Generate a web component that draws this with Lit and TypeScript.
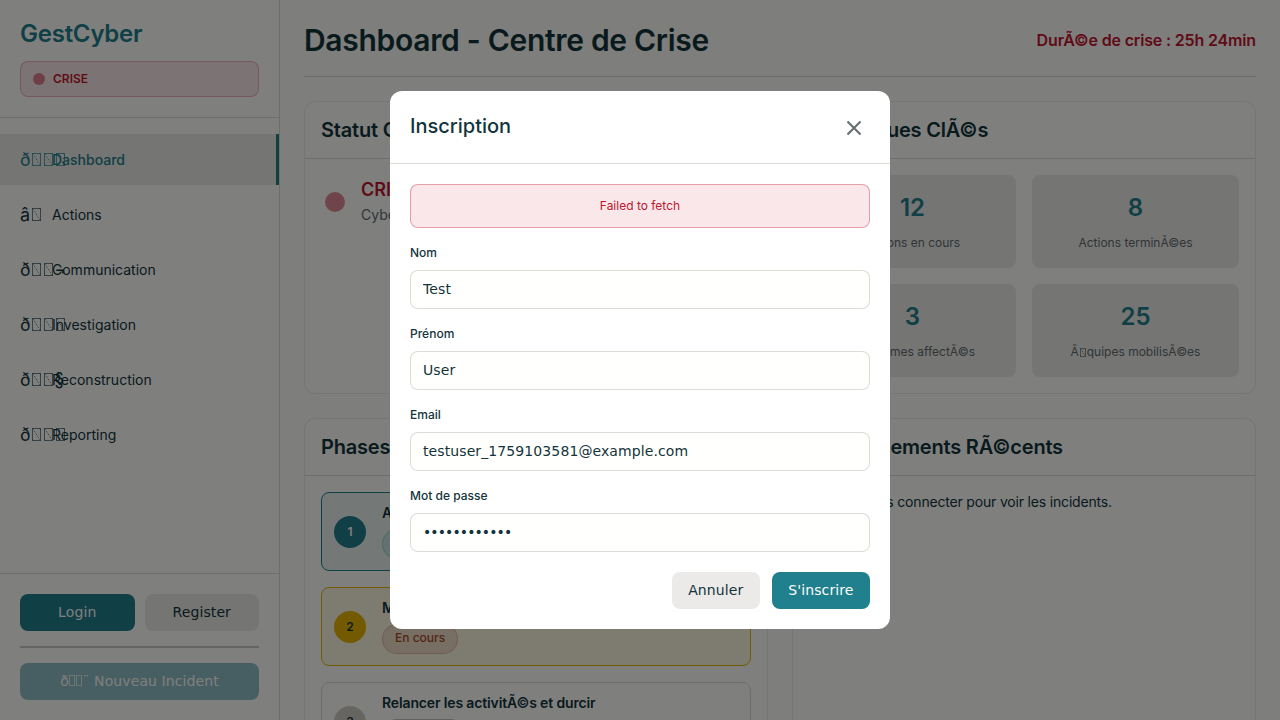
import { LitElement, html, css } from "lit";
import { customElement } from "lit/decorators.js";

const NAV = [
  { icon: "ð\u009f\u0093\u008a", label: "Dashboard", active: true },
  { icon: "â\u009a\u00a0", label: "Actions" },
  { icon: "ð\u009f\u0092¬", label: "Communication" },
  { icon: "ð\u009f\u0094\u008d", label: "Investigation" },
  { icon: "ð\u009f\u0094§", label: "Reconstruction" },
  { icon: "ð\u009f\u0093\u0088", label: "Reporting" },
];

const STATS = [
  { value: "12", label: "Actions en cours" },
  { value: "8", label: "Actions terminÃ©es" },
  { value: "3", label: "SystÃ¨mes affectÃ©s" },
  { value: "25", label: "Ã\u0089quipes mobilisÃ©es" },
];

const PHASES = [
  { n: 1, state: "active", title: "Analyser et contenir", pill: "En cours" },
  { n: 2, state: "warn", title: "Maintenir la continuitÃ©", pill: "En cours" },
  { n: 3, state: "idle", title: "Relancer les activitÃ©s et durcir", pill: "En attente" },
];

const FIELDS = [
  { label: "Nom", type: "text", value: "Test" },
  { label: "Prénom", type: "text", value: "User" },
  { label: "Email", type: "email", value: "testuser_1759103581@example.com" },
  { label: "Mot de passe", type: "password", value: "testpass1234" },
];

// C1 control chars have no glyph here, so draw the missing-glyph box ourselves
const tofu = (text: string) =>
  text.split(/([\u0080-\u009f])/).map((part, i) => (i % 2 ? html`<i class="tofu"></i>` : part));

@customElement("app-root")
export class AppRoot extends LitElement {
  static styles = css`
    :host {
      display: block;
      height: 720px;
      overflow: hidden;
      font-family: Inter, "Liberation Sans", sans-serif;
      color: #13343b;
      background: #fcfcf9;
      font-size: 14px;
    }
    * { box-sizing: border-box; }
    button, input { font-family: "DejaVu Sans", sans-serif; letter-spacing: 0.1px; }

    .tofu {
      display: inline-block;
      width: 0.5em;
      height: 0.75em;
      margin: 0 0.08em;
      vertical-align: -0.05em;
      border: 1px solid rgba(19, 52, 59, 0.6);
      background: linear-gradient(to top right, transparent calc(50% - 0.4px), rgba(19, 52, 59, 0.6), transparent calc(50% + 0.4px));
    }
    .active .tofu {
      border-color: rgba(33, 128, 141, 0.7);
      background: linear-gradient(to top right, transparent calc(50% - 0.4px), rgba(33, 128, 141, 0.7), transparent calc(50% + 0.4px));
    }
    .stat .tofu { border-color: rgba(98, 108, 113, 0.7); }
    .btn .tofu {
      width: 0.43em;
      height: 0.8em;
      margin: 0 0.03em;
      border-color: rgba(252, 252, 249, 0.7);
      background: none;
    }

    .layout { display: flex; height: 720px; }

    /* sidebar */
    .sidebar {
      width: 280px;
      flex-shrink: 0;
      background: #fffffd;
      border-right: 1px solid rgba(94, 82, 64, 0.2);
      display: flex;
      flex-direction: column;
    }
    .brand {
      padding: 20px 20px 20px;
      border-bottom: 1px solid rgba(94, 82, 64, 0.2);
    }
    .logo {
      margin: 0 0 13px;
      font-size: 24px;
      line-height: 28px;
      font-weight: 600;
      letter-spacing: -0.01em;
      color: #21808d;
    }
    .crisis-badge {
      height: 36px;
      display: flex;
      align-items: center;
      gap: 8px;
      padding: 0 12px 1px;
      background: rgba(192, 21, 47, 0.1);
      border: 1px solid rgba(192, 21, 47, 0.25);
      border-radius: 8px;
      color: #c0152f;
      font-size: 12px;
      font-weight: 600;
    }
    .crisis-badge i {
      width: 12px;
      height: 12px;
      border-radius: 50%;
      background: #c0152f;
      opacity: 0.5;
    }
    nav { flex: 1; padding-top: 16px; }
    .nav-item {
      height: 51px;
      margin-bottom: 4px;
      padding: 0 20px 1px;
      display: flex;
      align-items: center;
      font-size: 14px;
      border-right: 3px solid transparent;
    }
    .nav-item.active {
      background: rgba(94, 82, 64, 0.12);
      color: #21808d;
      font-weight: 500;
      border-right-color: #21808d;
    }
    .nav-icon {
      width: 20px;
      margin-right: 12px;
      flex-shrink: 0;
      font-size: 18px;
      font-weight: 400;
      white-space: pre;
    }
    .side-foot {
      padding: 20px;
      border-top: 1px solid rgba(94, 82, 64, 0.2);
    }
    .auth { display: flex; gap: 10px; }
    .btn {
      height: 37px;
      border: 0;
      border-radius: 8px;
      font-size: 14px;
      padding: 0 16.5px 2px;
      white-space: pre;
    }
    .auth .btn { flex: 1; }
    .primary { background: #21808d; color: #fcfcf9; }
    .secondary { background: rgba(94, 82, 64, 0.12); color: #13343b; }
    .rule {
      height: 2px;
      margin: 15px 0;
      background: rgba(94, 82, 64, 0.3);
    }
    .wide { width: 100%; display: block; opacity: 0.5; }

    /* main */
    main { flex: 1; min-width: 0; padding: 0 24px; }
    .head {
      height: 77px;
      display: flex;
      justify-content: space-between;
      align-items: center;
      border-bottom: 1px solid rgba(94, 82, 64, 0.2);
      margin-bottom: 24px;
      padding-top: 3px;
    }
    h1 { margin: 0; font-size: 30px; font-weight: 600; letter-spacing: -0.01em; }
    .duration { color: #c0152f; font-size: 16px; font-weight: 600; letter-spacing: -0.01em; }
    .grid {
      display: grid;
      grid-template-columns: 1fr 1fr;
      grid-template-rows: 293px auto;
      gap: 24px;
    }
    .card {
      background: #fffffd;
      border: 1px solid rgba(94, 82, 64, 0.12);
      border-radius: 12px;
      overflow: hidden;
    }
    .card-head {
      height: 57px;
      display: flex;
      align-items: center;
      padding: 0 16px;
      border-bottom: 1px solid rgba(94, 82, 64, 0.2);
    }
    h3 { margin: 0; font-size: 20px; font-weight: 600; letter-spacing: -0.01em; }
    .card-body { padding: 16px; }
    .status { display: flex; align-items: center; gap: 16px; padding: 20px; }
    .status i {
      width: 20px;
      height: 20px;
      margin-top: 2px;
      border-radius: 50%;
      background: #c0152f;
      opacity: 0.5;
    }
    .status b { display: block; color: #c0152f; font-size: 18px; font-weight: 600; margin-bottom: 6px; }
    .status span { color: #626c71; }
    .stats { display: grid; grid-template-columns: 1fr 1fr; gap: 16px; }
    .stat {
      height: 93px;
      border-radius: 8px;
      background: rgba(94, 82, 64, 0.12);
      display: flex;
      flex-direction: column;
      align-items: center;
      padding-top: 17px;
    }
    .stat b { font-size: 24px; line-height: 32px; font-weight: 600; color: #21808d; margin-bottom: 11px; }
    .stat span { font-size: 12px; color: #626c71; white-space: pre; }
    .phase {
      height: 79px;
      display: flex;
      align-items: center;
      gap: 16px;
      padding: 0 12px;
      margin-bottom: 16px;
      border: 1px solid rgba(94, 82, 64, 0.2);
      border-radius: 8px;
    }
    .phase.active { border-color: #21808d; background: rgba(33, 128, 141, 0.1); }
    .phase.warn { border-color: #e6b400; background: rgba(230, 180, 0, 0.1); }
    .num {
      width: 32px;
      height: 32px;
      flex-shrink: 0;
      border-radius: 50%;
      display: flex;
      align-items: center;
      justify-content: center;
      font-size: 12px;
      font-weight: 600;
      background: rgba(94, 82, 64, 0.3);
    }
    .active .num { background: #21808d; color: #fcfcf9; }
    .warn .num { background: #e6b400; }
    .phase p { margin: 0 0 8px; font-size: 14px; line-height: 16px; font-weight: 600; letter-spacing: -0.01em; }
    .pill {
      display: block;
      width: fit-content;
      height: 30px;
      line-height: 26px;
      padding: 0 12px;
      font-size: 12px;
      font-weight: 500;
      border-radius: 15px;
      border: 1px solid rgba(94, 82, 64, 0.25);
      background: rgba(94, 82, 64, 0.12);
      color: #626c71;
    }
    .active .pill { background: rgba(33, 128, 141, 0.15); border-color: rgba(33, 128, 141, 0.25); color: #21808d; }
    .warn .pill { background: rgba(168, 75, 47, 0.15); border-color: rgba(168, 75, 47, 0.25); color: #a84b2f; }
    .events { margin: 0; font-size: 14px; line-height: 20px; letter-spacing: -0.18px; }

    /* modal */
    .overlay {
      position: fixed;
      inset: 0;
      background: rgba(0, 0, 0, 0.5);
      display: flex;
      align-items: center;
      justify-content: center;
    }
    .modal {
      width: 500px;
      background: #fff;
      border-radius: 12px;
    }
    .modal-head {
      height: 73px;
      padding: 0 20px;
      display: flex;
      justify-content: space-between;
      align-items: center;
      border-bottom: 1px solid rgba(94, 82, 64, 0.2);
    }
    .modal-head h3 { font-weight: 500; letter-spacing: 0; margin-top: -2px; }
    .close { display: flex; margin: 1px 8px 0 0; color: #626c71; }
    .modal-body { padding: 20px; }
    .error {
      height: 44px;
      display: flex;
      align-items: center;
      justify-content: center;
      margin-bottom: 16px;
      padding-bottom: 1px;
      font-size: 12px;
      color: #c0152f;
      background: rgba(192, 21, 47, 0.1);
      border: 1px solid rgba(192, 21, 47, 0.35);
      border-radius: 8px;
    }
    .field { margin-bottom: 16px; }
    label {
      display: block;
      margin-bottom: 8px;
      font-size: 12px;
      line-height: 18px;
      font-weight: 500;
    }
    input {
      display: block;
      width: 100%;
      height: 39px;
      padding: 0 12px 2px;
      font-size: 14px;
      color: #13343b;
      background: #fffffd;
      border: 1px solid rgba(94, 82, 64, 0.2);
      border-radius: 8px;
      outline: none;
    }
    input[type="password"] { letter-spacing: -0.9px; }
    .actions { display: flex; justify-content: flex-end; gap: 12px; margin-top: 20px; }
  `;

  render() {
    return html`
      <div class="layout">
        <aside class="sidebar">
          <div class="brand">
            <h1 class="logo">GestCyber</h1>
            <div class="crisis-badge"><i></i>CRISE</div>
          </div>
          <nav>
            ${NAV.map(item => html`
              <div class="nav-item ${item.active ? "active" : ""}">
                <span class="nav-icon">${tofu(item.icon)}</span>${item.label}
              </div>
            `)}
          </nav>
          <div class="side-foot">
            <div class="auth">
              <button class="btn primary">Login</button>
              <button class="btn secondary">Register</button>
            </div>
            <div class="rule"></div>
            <button class="btn primary wide">${tofu("ð\u009f\u009a¨ Nouveau Incident")}</button>
          </div>
        </aside>
        <main>
          <header class="head">
            <h1>Dashboard - Centre de Crise</h1>
            <div class="duration">DurÃ©e de crise : 25h 24min</div>
          </header>
          <div class="grid">
            <section class="card">
              <div class="card-head"><h3>Statut Global</h3></div>
              <div class="card-body status">
                <i></i>
                <div><b>CRISE ACTIVE</b><span>Cyberattaque en cours</span></div>
              </div>
            </section>
            <section class="card">
              <div class="card-head"><h3>Statistiques ClÃ©s</h3></div>
              <div class="card-body stats">
                ${STATS.map(s => html`<div class="stat"><b>${s.value}</b><span>${tofu(s.label)}</span></div>`)}
              </div>
            </section>
            <section class="card">
              <div class="card-head"><h3>Phases de Crise</h3></div>
              <div class="card-body">
                ${PHASES.map(p => html`
                  <div class="phase ${p.state}">
                    <div class="num">${p.n}</div>
                    <div><p>${p.title}</p><span class="pill">${p.pill}</span></div>
                  </div>
                `)}
              </div>
            </section>
            <section class="card">
              <div class="card-head"><h3>${tofu("Ã\u0089vÃ©nements RÃ©cents")}</h3></div>
              <div class="card-body">
                <p class="events">Veuillez vous connecter pour voir les incidents.</p>
              </div>
            </section>
          </div>
        </main>
      </div>
      <div class="overlay">
        <div class="modal">
          <div class="modal-head">
            <h3>Inscription</h3>
            <span class="close">
              <svg width="16" height="16" viewBox="0 0 16 16" fill="none" stroke="currentColor" stroke-width="2">
                <path d="M1.5 1.5l13 13M14.500 1.500l-13 13" />
              </svg>
            </span>
          </div>
          <div class="modal-body">
            <div class="error">Failed to fetch</div>
            ${FIELDS.map(f => html`
              <div class="field">
                <label>${f.label}</label>
                <input type=${f.type} .value=${f.value} />
              </div>
            `)}
            <div class="actions">
              <button class="btn secondary">Annuler</button>
              <button class="btn primary">S'inscrire</button>
            </div>
          </div>
        </div>
      </div>
    `;
  }
}
